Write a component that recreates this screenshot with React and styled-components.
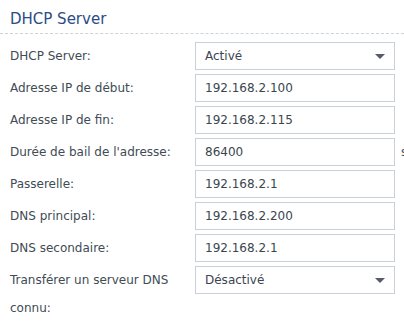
import React from 'react';
import styled, { createGlobalStyle } from 'styled-components'

const GlobalStyle = createGlobalStyle`
  html, body {
    margin:0;
    padding:0;
    background:#fff;
    overflow:hidden;
  }
  body {
    font-family:"DejaVu Sans", Verdana, sans-serif;
  }
`

const Panel = styled.section`
  width:404px;
  overflow:hidden;
`

const Heading = styled.h2`
  margin:0;
  padding:9px 0 4px 10px;
  height:20px;
  line-height:20px;
  font-size:15px;
  font-weight:normal;
  color:#2b4c86;
  border-bottom:1px dashed #cfd3d8;
`

const Form = styled.div`
  display:grid;
  grid-template-columns:185px 200px 20px;
  row-gap:4px;
  padding:8px 0 0 10px;
  width:420px;
`

const Label = styled.div`
  font-size:12px;
  line-height:28px;
  color:#414b55;
  padding-right:12px;
`

const Field = styled.div`
  box-sizing:border-box;
  height:28px;
  border:1px solid #c9d0d9;
  padding:0 9px;
  display:flex;
  align-items:center;
  justify-content:space-between;
  font-size:12px;
  color:#3a4550;
  background:#fff;
`

const Arrow = styled.span`
  width:0;
  height:0;
  border-left:5px solid transparent;
  border-right:5px solid transparent;
  border-top:5px solid #555c63;
  margin-right:0;
`

const Unit = styled.div`
  font-size:12px;
  line-height:28px;
  color:#414b55;
  padding-left:6px;
`

const rows = [
  { label:'DHCP Server:', value:'Activé', select:true },
  { label:'Adresse IP de début:', value:'192.168.2.100' },
  { label:'Adresse IP de fin:', value:'192.168.2.115' },
  { label:"Durée de bail de l'adresse:", value:'86400', unit:'s' },
  { label:'Passerelle:', value:'192.168.2.1' },
  { label:'DNS principal:', value:'192.168.2.200' },
  { label:'DNS secondaire:', value:'192.168.2.1' },
  { label:'Transférer un serveur DNS connu:', value:'Désactivé', select:true },
]

const App = () => {
  return(
    <Panel>
      <GlobalStyle/>
      <Heading>DHCP Server</Heading>
      <Form>
        {rows.map((r)=>(
          <React.Fragment key={r.label}>
            <Label>{r.label}</Label>
            <div>
              <Field>
                <span>{r.value}</span>
                {r.select && <Arrow/>}
              </Field>
            </div>
            <Unit>{r.unit || ''}</Unit>
          </React.Fragment>
        ))}
      </Form>
    </Panel>
  )
}

export default App
